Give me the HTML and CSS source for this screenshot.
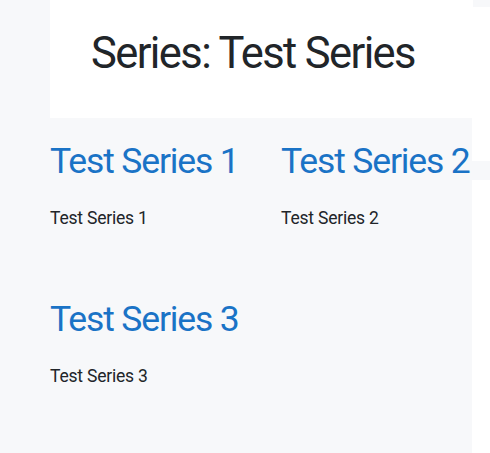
FILE: index.html
```html
<!DOCTYPE html>
<html lang="en">
<head>
<meta charset="utf-8">
<title>Series: Test Series</title>
<link rel="stylesheet" href="styles.css">
</head>
<body>
<div class="page">
  <aside class="sidebar"></aside>
  <main class="main">
    <header class="header">
      <h1 class="title">Series: Test Series</h1>
    </header>
    <section class="grid">
      <article class="card">
        <h2 class="card-title"><a href="#">Test Series 1</a></h2>
        <p class="card-text">Test Series 1</p>
      </article>
      <article class="card">
        <h2 class="card-title"><a href="#">Test Series 2</a></h2>
        <p class="card-text">Test Series 2</p>
      </article>
      <article class="card">
        <h2 class="card-title"><a href="#">Test Series 3</a></h2>
        <p class="card-text">Test Series 3</p>
      </article>
    </section>
  </main>
  <div class="gutter">
    <div class="gutter-bar gutter-top"></div>
    <div class="gutter-bar gutter-mid"></div>
  </div>
</div>
</body>
</html>
```

FILE: styles.css
```css
html, body {
  margin: 0;
  padding: 0;
  background: #ffffff;
}

body {
  font-family: Roboto, "Noto Sans", sans-serif;
  color: #212529;
}

.page {
  display: flex;
  min-height: 453px;
}

.sidebar {
  width: 50px;
  flex: 0 0 50px;
  background: #f7f8fa;
}

.main {
  width: 422px;
  flex: 0 0 422px;
  background: #f7f8fa;
  display: flex;
  flex-direction: column;
}

.header {
  background: #ffffff;
  height: 118px;
  box-sizing: border-box;
  padding: 28px 0 0 41px;
}

.title {
  margin: 0;
  font-size: 43.5px;
  font-weight: 400;
  line-height: 52px;
  letter-spacing: -1.6px;
  color: #212529;
}

.grid {
  display: grid;
  grid-template-columns: 231px 1fr;
  row-gap: 67px;
  padding: 22px 0 0 0;
}

.card {
  min-width: 0;
}

.card-title {
  margin: 0 0 24px 0;
  font-size: 35.5px;
  font-weight: 400;
  line-height: 42px;
  letter-spacing: -1.15px;
  white-space: nowrap;
}

.card-title a {
  color: #1a73c6;
  text-decoration: none;
}

.card-text {
  margin: 0;
  font-size: 17.5px;
  line-height: 25px;
  letter-spacing: -0.2px;
  color: #212529;
}

.gutter {
  flex: 1 1 auto;
  display: flex;
  flex-direction: column;
}

.gutter-bar {
  background: #f7f8fa;
}

.gutter-top {
  height: 7px;
  margin-left: 1px;
}

.gutter-mid {
  height: 19px;
  margin-top: 154px;
}
```
